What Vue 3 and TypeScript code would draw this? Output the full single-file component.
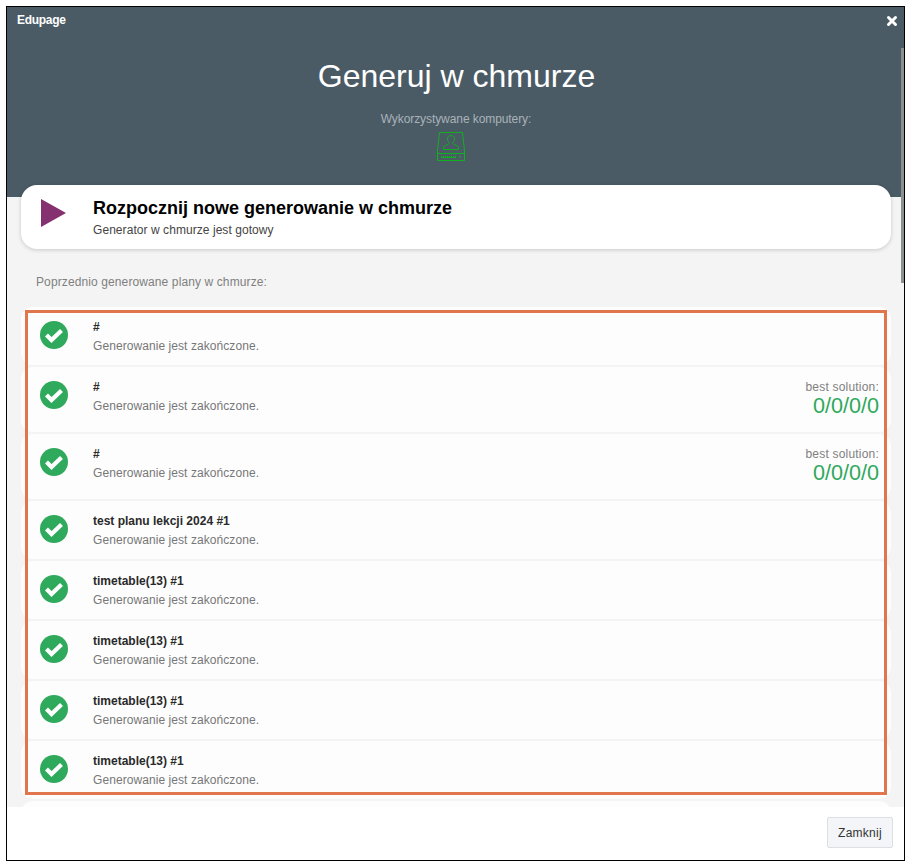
<script setup lang="ts">
interface Run { title: string; best?: string }
const runs: Run[] = [
  { title: '#' },
  { title: '#', best: '0/0/0/0' },
  { title: '#', best: '0/0/0/0' },
  { title: 'test planu lekcji 2024 #1' },
  { title: 'timetable(13) #1' },
  { title: 'timetable(13) #1' },
  { title: 'timetable(13) #1' },
  { title: 'timetable(13) #1' },
  { title: '' },
]
</script>

<template>
  <div class="page">
    <div class="window">
      <div class="body">
        <header class="hero">
          <div class="bar">
            <span class="app">Edupage</span>
            <svg class="close" viewBox="0 0 12 12" width="12" height="12"><path d="M2.500 2.500 9.500 9.500M9.500 2.500 2.500 9.500" stroke="#fff" stroke-width="3" stroke-linecap="round" /></svg>
          </div>
          <h1>Generuj w chmurze</h1>
          <div class="used">Wykorzystywane komputery:</div>
          <svg class="computer" viewBox="0 0 28 29" width="28" height="29" fill="none" stroke="#0fb11f" stroke-width="1">
            <path d="M2.500 .5H25.500L27.500 18.500V28.500H.5V18.500Z" />
            <path d="M.5 21.500H27.500" />
            <path d="M4 25.500H19M4.500 24v1.500M6.500 24v1.500M8.500 24v1.500M10.500 24v1.500M12.500 24v1.500M14.500 24v1.500M16.500 24v1.500M18.500 24v1.500" />
            <path d="M22 25h1.500" stroke-width="1.400" />
            <path d="M10.500 7C10.500 4.500 11.800 3.500 14 3.500S17.500 4.500 17.500 7C17.500 9 16 10 16 11.500 16 13 21.500 13 21.500 15.500V17.500H6.500V15.500C6.500 13 12 13 12 11.500 12 10 10.500 9 10.500 7Z" />
          </svg>
        </header>

        <div class="content">
          <button class="start" type="button">
            <svg class="play" viewBox="0 0 25 28" width="25" height="28"><path d="M0 0 25 14 0 28Z" fill="#85316f" /></svg>
            <span class="start-text">
              <strong>Rozpocznij nowe generowanie w chmurze</strong>
              <small>Generator w chmurze jest gotowy</small>
            </span>
          </button>

          <p class="previous">Poprzednio generowane plany w chmurze:</p>

          <div class="list">
            <div v-for="(run, i) in runs" :key="i" class="row" :class="{ tall: run.best }">
              <template v-if="run.title">
                <svg class="ok" viewBox="0 0 28 28" width="28" height="28">
                  <circle cx="14" cy="14" r="14" fill="#2fa95c" />
                  <path d="M6.500 14 11.500 19 21.500 9.500" fill="none" stroke="#fff" stroke-width="4.200" />
                </svg>
                <div class="info">
                  <div class="name">{{ run.title }}</div>
                  <div class="state">Generowanie jest zakończone.</div>
                </div>
                <div v-if="run.best" class="best">
                  <span>best solution:</span>
                  <b>{{ run.best }}</b>
                </div>
              </template>
            </div>
          </div>
          <div class="highlight"></div>
        </div>

        <div class="scrollbar"></div>
      </div>

      <footer class="footer">
        <button class="closebtn" type="button">Zamknij</button>
      </footer>
    </div>
  </div>
</template>

<style>
html, body { margin: 0; background: #fff; }
</style>

<style scoped>
.page {
  box-sizing: border-box;
  width: 911px;
  height: 868px;
  padding: 6px 6px 7px 6px;
  font-family: "Liberation Sans", Arial, sans-serif;
}
.window {
  box-sizing: border-box;
  width: 899px;
  height: 855px;
  border: 1px solid #000;
  display: flex;
  flex-direction: column;
  background: #fff;
}
.body {
  position: relative;
  height: 800px;
  overflow: hidden;
  background: #f4f4f4;
}
.hero {
  height: 190px;
  background: #4a5b66;
  display: flex;
  flex-direction: column;
  align-items: center;
}
.bar {
  align-self: stretch;
  display: flex;
  justify-content: space-between;
  align-items: center;
  padding: 5px 6px 0 10px;
  height: 15px;
}
.app { color: #fff; font-size: 12px; font-weight: 700; letter-spacing: -.28px; }
.close { margin-top: 2px; }
h1 {
  margin: 30px 0 0 2px;
  color: #fff;
  font-size: 32px;
  font-weight: 400;
  line-height: 38px;
}
.used { margin-top: 17px; color: #a9b2b8; font-size: 12px; line-height: 14px; letter-spacing: -.08px; margin-left: 1px; }
.computer { margin-top: 6px; margin-left: -9px; }
.content {
  position: relative;
  margin-top: -12px;
  padding: 0 13px 0 14px;
}
.start {
  box-sizing: border-box;
  width: 870px;
  height: 64px;
  border: 0;
  padding: 0 0 0 20px;
  display: flex;
  align-items: center;
  gap: 27px;
  background: #fff;
  border-radius: 16px;
  box-shadow: 0 1px 4px rgba(0, 0, 0, .18);
  text-align: left;
  font-family: inherit;
}
.play { align-self: flex-start; margin-top: 14px; }
.start-text { display: flex; flex-direction: column; }
.start-text strong { color: #000; font-size: 18px; line-height: 24px; }
.start-text small { color: #444; font-size: 12px; line-height: 18px; margin-top: 1px; letter-spacing: .06px; }
.previous {
  margin: 26px 0 0 15px;
  color: #808080;
  font-size: 12px;
  line-height: 14px;
  letter-spacing: .11px;
}
.list {
  margin-top: 18px;
  display: flex;
  flex-direction: column;
  gap: 2px;
  width: 870px;
}
.row {
  box-sizing: border-box;
  flex: none;
  height: 58px;
  padding: 14px 12px 0 19px;
  display: flex;
  align-items: flex-start;
  background: #fdfdfd;
  border-radius: 12px;
}
.row.tall { height: 65px; }
.ok { flex: none; }
.info { margin-left: 25px; margin-top: -1px; flex: 1; }
.name { color: #2a2a2a; font-size: 12px; font-weight: 700; line-height: 14px; }
.state { margin-top: 5px; color: #777; font-size: 12px; line-height: 14px; letter-spacing: .07px; }
.best { display: flex; flex-direction: column; align-items: flex-end; margin-top: -1px; }
.best span { color: #808080; font-size: 12px; line-height: 14px; letter-spacing: .2px; }
.best b { color: #2fa95c; font-size: 21.6px; font-weight: 400; line-height: 23px; }
.highlight {
  position: absolute;
  left: 18px;
  top: 125px;
  box-sizing: border-box;
  width: 862px;
  height: 485px;
  border: 3px solid #e0764c;
  pointer-events: none;
}
.scrollbar {
  position: absolute;
  right: 0;
  top: 41px;
  width: 3px;
  height: 235px;
  background: #8b9090;
}
.footer {
  flex: 1;
  display: flex;
  justify-content: flex-end;
  align-items: flex-start;
  padding: 10px 11px 0 0;
  background: #fff;
}
.closebtn {
  box-sizing: border-box;
  width: 66px;
  height: 31px;
  border: 1px solid #dcdfe3;
  border-radius: 2px;
  background: #f4f5f9;
  color: #333;
  font-family: inherit;
  font-size: 12px;
  letter-spacing: .25px;
  padding: 0;
}
</style>
